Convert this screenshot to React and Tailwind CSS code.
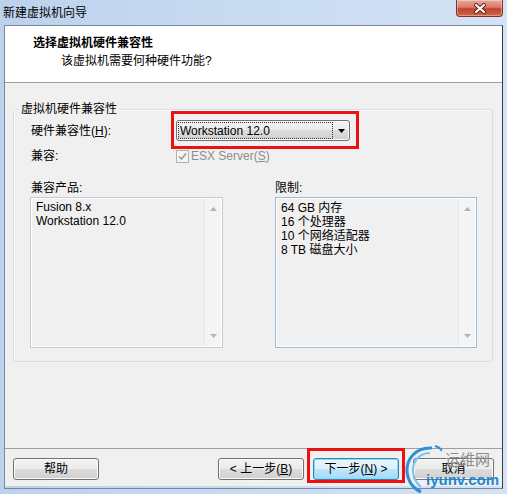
import React from "react";

const font = { fontFamily: '"Liberation Sans", "Noto Sans CJK SC", sans-serif' };

const btn =
  "h-[22px] rounded-[3px] border border-[#707070] bg-[linear-gradient(#f2f2f2_0%,#ebebeb_50%,#dddddd_50%,#cfcfcf_100%)] shadow-[inset_0_0_0_1px_#fbfbfb] flex items-center justify-center text-[12px] leading-[14px] text-black";

function ScrollArrows() {
  return (
    <div className="w-[17px] h-full border-l border-[#e8e8e8] bg-[#f4f4f4] flex flex-col items-center justify-between py-[8px]">
      <svg width="7" height="4" viewBox="0 0 7 4">
        <path d="M0 4 L3.5 0 L7 4 Z" fill="#b4b4b4" />
      </svg>
      <svg width="7" height="4" viewBox="0 0 7 4">
        <path d="M0 0 L3.5 4 L7 0 Z" fill="#b4b4b4" />
      </svg>
    </div>
  );
}

function ListBox({ items, border, pt }) {
  return (
    <div className={`h-[151px] border ${border} shadow-[inset_0_0_0_1px_#ffffff] bg-[#f0f0f0] flex p-[1px]`}>
      <div className={`flex-1 pl-[4px] ${pt} text-[12px] leading-[14px] text-black`}>
        {items.map((t) => (
          <div key={t}>{t}</div>
        ))}
      </div>
      <ScrollArrows />
    </div>
  );
}

function Watermark() {
  return (
    <div className="absolute left-[402px] top-[445px] w-[105px] h-[49px] pointer-events-none">
      <svg className="absolute left-0 top-0" width="40" height="49" viewBox="0 0 40 49">
        <path d="M30 3 C14 2 4 14 5 27 C6 37 12 44 19 47" fill="none" stroke="#2f8fd8" strokeWidth="3" />
        <path d="M28 8 C17 8 10 17 11 27 C12 34 15 39 19 42" fill="none" stroke="#7cc0ee" strokeWidth="2" />
        <path d="M33 1 C37 2 39 4 40 6" fill="none" stroke="#2f8fd8" strokeWidth="2" />
      </svg>
      <div className="absolute left-[43px] top-[5px] text-[15px] leading-[18px] text-[#8a8a8a]" style={{ fontFamily: '"Noto Sans CJK SC", sans-serif' }}>
        运维网
      </div>
      <div className="absolute left-[24px] top-[26px] text-[15px] leading-[18px] font-bold text-[#1b8ad3]" style={{ fontFamily: '"Liberation Sans", sans-serif' }}>
        iyunv.com
      </div>
    </div>
  );
}

export default function App() {
  return (
    <div className="relative w-[507px] h-[494px] bg-[linear-gradient(90deg,#bcd2ec,#cbddf2_60%,#d3e3f5)] flex flex-col overflow-hidden" style={font}>
      {/* title bar */}
      <div className="h-[25px] flex items-start">
        <div className="pl-[3px] pt-[6px] text-[12px] leading-[14px] text-black">新建虚拟机向导</div>
        <div className="ml-auto mr-[4px] w-[47px] h-[17px] rounded-b-[4px] border border-t-0 border-[#7d3329] bg-[linear-gradient(#e9aa9b_0%,#d77c67_45%,#c2432d_55%,#d0644a_100%)] shadow-[inset_0_0_0_1px_rgba(255,255,255,0.35)] flex items-center justify-center">
          <svg width="14" height="11" viewBox="0 0 14 11">
            <path d="M3 2 L11 9 M11 2 L3 9" stroke="#5b1f17" strokeWidth="4" strokeLinecap="round" />
            <path d="M3 2 L11 9 M11 2 L3 9" stroke="#ffffff" strokeWidth="2.2" strokeLinecap="round" />
          </svg>
        </div>
      </div>

      {/* client area */}
      <div className="mx-[4px] h-[464px] border border-[#7b8796] border-r-[#3a3a3a] flex flex-col">
        <div className="h-[57px] bg-white border-b border-[#a0a0a0]">
          <div className="pl-[28px] pt-[10px] text-[12px] leading-[14px] font-bold text-black">选择虚拟机硬件兼容性</div>
          <div className="pl-[56px] mt-[4px] text-[12px] leading-[14px] text-black">该虚拟机需要何种硬件功能?</div>
        </div>

        <div className="h-[365px] bg-[#f0f0f0] pl-[8px] pr-[9px] pt-[26px]">
          <div className="relative border border-[#d5dfe5] rounded-[3px] shadow-[inset_1px_1px_0_#ffffff] pl-[16px] pr-[15px] pt-[10px] pb-[13px]">
            <span className="absolute left-[5px] -top-[8px] px-[2px] bg-[#f0f0f0] text-[12px] leading-[14px] text-black">
              虚拟机硬件兼容性
            </span>

            <div className="flex items-center h-[21px]">
              <div className="w-[146px] pl-[1px] text-[12px] leading-[14px] text-black">
                硬件兼容性(<span className="underline">H</span>):
              </div>
              <div className="relative w-[174px] h-[21px] rounded-[3px] border border-[#707070] bg-[linear-gradient(#f2f2f2_0%,#ebebeb_50%,#dddddd_50%,#cfcfcf_100%)] shadow-[inset_0_0_0_1px_#fbfbfb] flex items-center pl-[1px] pr-[4px]">
                <div className="w-[155px] h-[17px] border border-dotted border-[#333] flex items-center pl-[1px] text-[12px] leading-[14px] text-black">
                  Workstation 12.0
                </div>
                <svg className="ml-auto" width="7" height="4" viewBox="0 0 7 4">
                  <path d="M0 0 L7 0 L3.5 4 Z" fill="#000" />
                </svg>
                <div className="absolute -left-[6px] -top-[10px] -right-[10px] -bottom-[9px] border-[3px] border-[#ee1111]" />
              </div>
            </div>

            <div className="flex items-center h-[16px] mt-[7px]">
              <div className="w-[146px] pl-[1px] text-[12px] leading-[14px] text-black">兼容:</div>
              <div className="w-[13px] h-[13px] border border-[#b1b1b1] bg-[#f4f4f4] flex items-center justify-center">
                <svg width="9" height="9" viewBox="0 0 9 9">
                  <path d="M1 4.5 L3.5 7 L8 1.5" fill="none" stroke="#9c9c9c" strokeWidth="1.6" />
                </svg>
              </div>
              <div className="ml-[2px] text-[12px] leading-[14px] text-[#8d8d8d]">
                ESX Server(<span className="underline">S</span>)
              </div>
            </div>

            <div className="grid grid-cols-[193px_202px] gap-x-[52px] mt-[17px]">
              <div className="h-[14px] pl-[1px] text-[12px] leading-[14px] text-black">兼容产品:</div>
              <div className="h-[14px] text-[12px] leading-[14px] text-black">限制:</div>
              <div className="mt-[2px]">
                <ListBox items={["Fusion 8.x", "Workstation 12.0"]} border="border-[#c3ccd6]" pt="pt-[1px]" />
              </div>
              <div className="mt-[2px]">
                <ListBox items={["64 GB 内存", "16 个处理器", "10 个网络适配器", "8 TB 磁盘大小"]} border="border-[#9fbad6]" pt="pt-[2px]" />
              </div>
            </div>
          </div>
        </div>

        <div className="h-[38px] bg-[#f0f0f0] border-t border-[#a0a0a0] flex items-start pt-[9px]">
          <button className={`${btn} ml-[8px] w-[86px]`}>帮助</button>
          <button className={`${btn} ml-[119px] w-[86px]`}>
            &lt; 上一步(<span className="underline">B</span>)
          </button>
          <div className="relative ml-[9px]">
            <button className="w-[86px] h-[22px] rounded-[3px] border border-[#3c7fb1] bg-[linear-gradient(#eaf6fd_0%,#d9f0fc_50%,#bee6fd_50%,#a7d9f5_100%)] shadow-[inset_0_0_0_1px_#7fe0fb] flex items-center justify-center text-[12px] leading-[14px] text-black">
              下一步(<span className="underline">N</span>) &gt;
            </button>
            <div className="absolute -left-[6px] -top-[10px] -right-[6px] -bottom-[3px] border-[3px] border-[#ee1111]" />
          </div>
          <button className={`${btn} ml-[14px] w-[81px]`}>取消</button>
        </div>
      </div>

      <Watermark />
    </div>
  );
}
